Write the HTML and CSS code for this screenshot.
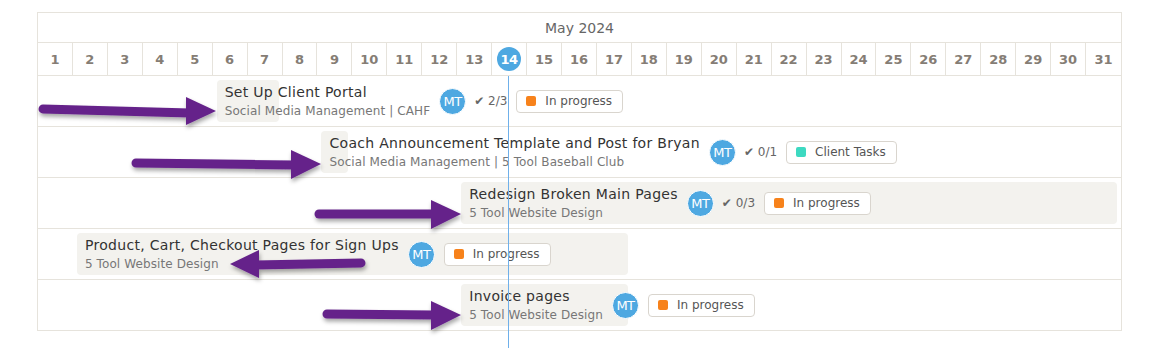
FILE: index.html
```html
<!DOCTYPE html>
<html lang="en">
<head>
<meta charset="UTF-8">
<meta name="viewport" content="width=device-width, initial-scale=1.0">
<title>Timeline - May 2024</title>
<link rel="stylesheet" href="styles.css">
</head>
<body>
    <div class="page">
        <div class="gantt">
            <div class="month">May 2024</div>
            <div class="days">
                <div class="day">1</div><div class="day">2</div><div class="day">3</div><div class="day">4</div>
                <div class="day">5</div><div class="day">6</div><div class="day">7</div><div class="day">8</div>
                <div class="day">9</div><div class="day">10</div><div class="day">11</div><div class="day">12</div>
                <div class="day">13</div><div class="day today"><span>14</span></div><div class="day">15</div><div class="day">16</div>
                <div class="day">17</div><div class="day">18</div><div class="day">19</div><div class="day">20</div>
                <div class="day">21</div><div class="day">22</div><div class="day">23</div><div class="day">24</div>
                <div class="day">25</div><div class="day">26</div><div class="day">27</div><div class="day">28</div>
                <div class="day">29</div><div class="day">30</div><div class="day">31</div>
            </div>

            <div class="row">
                <div class="bar" style="grid-column: 6 / 8;">
                    <div class="task-text">
                        <div class="task-title">Set Up Client Portal</div>
                        <div class="task-sub">Social Media Management | CAHF</div>
                    </div>
                    <div class="avatar">MT</div>
                    <div class="checks">&#10004; 2/3</div>
                    <div class="status"><span class="dot dot-orange"></span>In progress</div>
                </div>
            </div>

            <div class="row">
                <div class="bar" style="grid-column: 9 / 10;">
                    <div class="task-text">
                        <div class="task-title">Coach Announcement Template and Post for Bryan</div>
                        <div class="task-sub">Social Media Management | 5 Tool Baseball Club</div>
                    </div>
                    <div class="avatar">MT</div>
                    <div class="checks">&#10004; 0/1</div>
                    <div class="status"><span class="dot dot-teal"></span>Client Tasks</div>
                </div>
            </div>

            <div class="row">
                <div class="bar" style="grid-column: 13 / 32;">
                    <div class="task-text">
                        <div class="task-title">Redesign Broken Main Pages</div>
                        <div class="task-sub">5 Tool Website Design</div>
                    </div>
                    <div class="avatar">MT</div>
                    <div class="checks">&#10004; 0/3</div>
                    <div class="status"><span class="dot dot-orange"></span>In progress</div>
                </div>
            </div>

            <div class="row">
                <div class="bar" style="grid-column: 2 / 18;">
                    <div class="task-text">
                        <div class="task-title">Product, Cart, Checkout Pages for Sign Ups</div>
                        <div class="task-sub">5 Tool Website Design</div>
                    </div>
                    <div class="avatar">MT</div>
                    <div class="status"><span class="dot dot-orange"></span>In progress</div>
                </div>
            </div>

            <div class="row">
                <div class="bar" style="grid-column: 13 / 18;">
                    <div class="task-text">
                        <div class="task-title">Invoice pages</div>
                        <div class="task-sub">5 Tool Website Design</div>
                    </div>
                    <div class="avatar">MT</div>
                    <div class="status"><span class="dot dot-orange"></span>In progress</div>
                </div>
            </div>

            <div class="today-line"></div>
        </div>

        <!-- annotation arrows -->
        <svg class="arrows" width="1152" height="348" viewBox="0 0 1152 348">
            <defs>
                <filter id="shadow" x="-10%" y="-50%" width="120%" height="200%">
                    <feDropShadow dx="1" dy="3" stdDeviation="2" flood-color="#000" flood-opacity="0.35"/>
                </filter>
            </defs>
            <g fill="#65228a" stroke="#65228a" filter="url(#shadow)">
                <line x1="43" y1="109" x2="190" y2="113" stroke-width="9" stroke-linecap="round"/>
                <polygon points="186,97 216,111 186,125" stroke="none"/>

                <line x1="136" y1="163" x2="295" y2="165" stroke-width="9" stroke-linecap="round"/>
                <polygon points="291,150 321,164 291,179" stroke="none"/>

                <line x1="319" y1="214" x2="434" y2="214" stroke-width="9" stroke-linecap="round"/>
                <polygon points="431,200 461,214 431,229" stroke="none"/>

                <line x1="255" y1="265" x2="361" y2="263" stroke-width="9" stroke-linecap="round"/>
                <polygon points="259,250 230,264 259,278" stroke="none"/>

                <line x1="327" y1="314" x2="434" y2="315" stroke-width="9" stroke-linecap="round"/>
                <polygon points="431,301 461,315 431,330" stroke="none"/>
            </g>
        </svg>
    </div>
</body>
</html>
```

FILE: styles.css
```css
:root {
    --line-color: #e6e3dc;
    --bar-color: #f3f2ee;
    --text-color: #333;
    --muted-color: #777;
    --day-color: #857d75;
    --blue: #4ea8e1;
    --orange: #f7821b;
    --teal: #3dd9c1;
}

body {
    margin: 0;
    padding: 0;
    background-color: white;
    font-family: "DejaVu Sans", "Open Sans", sans-serif;
    color: var(--text-color);
}

.page {
    position: relative;
    width: 1152px;
    height: 348px;
    padding: 12px 0 0 37px;
    box-sizing: border-box;
    overflow: hidden;
}

.gantt {
    position: relative;
    width: 1085px;
    border: 1px solid var(--line-color);
    border-bottom: none;
    box-sizing: border-box;
}

.month {
    height: 29px;
    display: flex;
    align-items: center;
    justify-content: center;
    font-size: 14px;
    color: #666;
    border-bottom: 1px solid var(--line-color);
}

.days {
    display: grid;
    grid-template-columns: repeat(31, 1fr);
    height: 33px;
    border-bottom: 1px solid var(--line-color);
    box-sizing: border-box;
}

.day {
    display: flex;
    align-items: center;
    justify-content: center;
    font-size: 13px;
    font-weight: bold;
    color: var(--day-color);
    border-right: 1px solid var(--line-color);
}

.day:last-child {
    border-right: none;
}

.day.today span {
    width: 24px;
    height: 24px;
    border-radius: 50%;
    background-color: var(--blue);
    color: white;
    display: flex;
    align-items: center;
    justify-content: center;
    letter-spacing: -0.5px;
}

.row {
    display: grid;
    grid-template-columns: repeat(31, 1fr);
    height: 51px;
    align-items: center;
    border-bottom: 1px solid var(--line-color);
    box-sizing: border-box;
}

.bar {
    margin: 0 4px;
    height: 42px;
    background-color: var(--bar-color);
    border-radius: 4px;
    display: flex;
    align-items: center;
    gap: 9px;
    padding-left: 8px;
    white-space: nowrap;
    min-width: 0;
}

.task-text {
    display: flex;
    flex-direction: column;
    gap: 4px;
}

.task-title {
    font-size: 14px;
    color: var(--text-color);
    letter-spacing: 0.3px;
}

.task-sub {
    font-size: 12px;
    color: var(--muted-color);
    letter-spacing: 0.1px;
}

.avatar {
    flex: none;
    width: 25px;
    height: 25px;
    border-radius: 50%;
    background-color: var(--blue);
    border: 1.5px solid white;
    color: white;
    font-size: 13px;
    display: flex;
    align-items: center;
    justify-content: center;
    letter-spacing: -0.5px;
}

.checks {
    font-size: 12px;
    color: #666;
    margin-left: -1px;
}

.status {
    flex: none;
    height: 23px;
    display: flex;
    align-items: center;
    gap: 9px;
    padding: 0 10px 0 9px;
    border: 1px solid #d9d5ce;
    border-radius: 4px;
    background-color: white;
    font-size: 12px;
    color: #555;
    box-sizing: border-box;
}

.dot {
    width: 10px;
    height: 10px;
    border-radius: 2px;
}

.dot-orange {
    background-color: var(--orange);
}

.dot-teal {
    background-color: var(--teal);
}

.today-line {
    position: absolute;
    top: 63px;
    left: 470px;
    width: 1px;
    height: 300px;
    background-color: #6fb0ea;
}

.arrows {
    position: absolute;
    top: 0;
    left: 0;
    pointer-events: none;
}
```
